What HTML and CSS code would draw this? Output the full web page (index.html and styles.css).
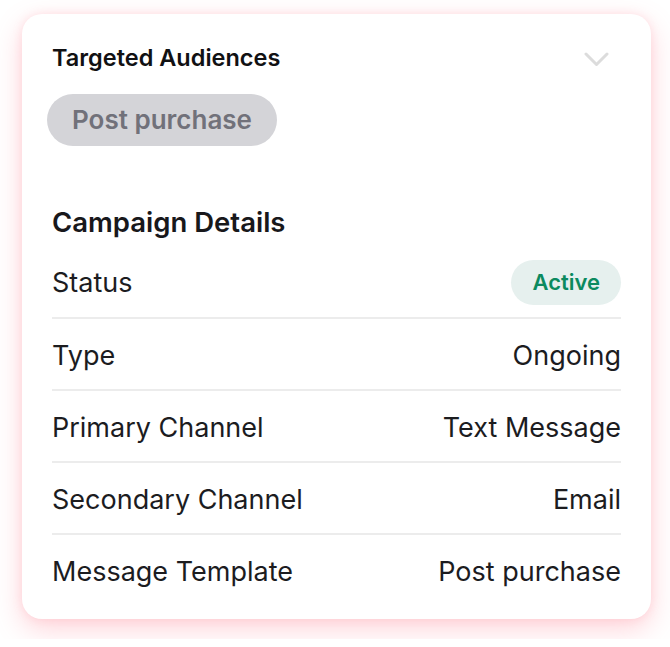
FILE: index.html
```html
<!DOCTYPE html>
<html lang="en">
<head>
<meta charset="utf-8">
<title>Campaign</title>
<link rel="stylesheet" href="styles.css">
</head>
<body>
<div class="card">
  <div class="header">
    <h2 class="title">Targeted Audiences</h2>
    <svg class="chevron" width="25" height="18" viewBox="0 0 25 18" aria-hidden="true">
      <path d="M2 3 L12.5 13.5 L23 3" fill="none" stroke="#dcdcdc" stroke-width="3" stroke-linecap="round" stroke-linejoin="round"/>
    </svg>
  </div>
  <div class="tags">
    <span class="tag">Post purchase</span>
  </div>
  <h3 class="section">Campaign Details</h3>
  <div class="rows">
    <div class="row"><span class="label">Status</span><span class="badge">Active</span></div>
    <div class="row"><span class="label">Type</span><span class="value">Ongoing</span></div>
    <div class="row"><span class="label">Primary Channel</span><span class="value">Text Message</span></div>
    <div class="row"><span class="label">Secondary Channel</span><span class="value">Email</span></div>
    <div class="row"><span class="label">Message Template</span><span class="value">Post purchase</span></div>
  </div>
</div>
</body>
</html>
```
FILE: styles.css
```css
* { box-sizing: border-box; }
html, body { margin: 0; padding: 0; background: #ffffff; }
body {
  font-family: Inter, "Noto Sans", sans-serif;
  color: #18181b;
  padding: 14px 19px 20px 22px;
}
.card {
  width: 629px;
  background: #ffffff;
  border-radius: 20px;
  box-shadow: 0 10px 28px rgba(255, 110, 130, 0.3), 0 0 10px rgba(255, 150, 165, 0.22);
  padding: 30px 30px 14px 30px;
}
.header {
  display: flex;
  align-items: center;
  justify-content: space-between;
  height: 28px;
}
.title {
  margin: 0;
  font-size: 23.5px;
  line-height: 28px;
  font-weight: 600;
  color: #111113;
}
.chevron { margin-right: 12px; margin-top: 4px; }
.tags { margin-top: 22px; display: flex; }
.tag {
  margin-left: -5px;
  height: 52px;
  line-height: 52px;
  padding: 0 25px;
  border-radius: 26px;
  background: #d4d4d8;
  color: #71717a;
  font-size: 26px;
  font-weight: 600;
}
.section {
  margin: 60px 0 0 0;
  font-size: 27.5px;
  line-height: 32px;
  font-weight: 600;
  color: #18181b;
}
.rows { margin-top: 9px; }
.row {
  display: flex;
  align-items: center;
  justify-content: space-between;
  height: 72px;
  padding-top: 3px;
  border-bottom: 2px solid #ececec;
  font-size: 27px;
  color: #1c1c1f;
}
.row:first-child { padding-top: 0; }
.row:last-child { border-bottom: none; height: 70px; }
.badge {
  height: 45px;
  line-height: 45px;
  padding: 0 21px;
  border-radius: 23px;
  background: #e6f0ee;
  color: #0b8a5f;
  font-size: 22px;
  font-weight: 600;
}
```
